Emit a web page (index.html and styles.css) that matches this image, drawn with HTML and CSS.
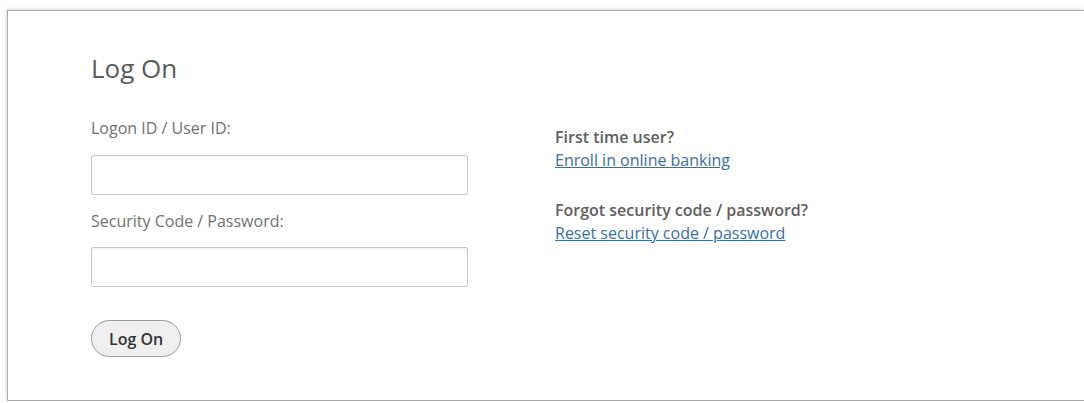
FILE: index.html
```html
<!DOCTYPE html>
<html lang="en">
<head>
<meta charset="utf-8">
<title>Log On</title>
<link rel="stylesheet" href="styles.css">
</head>
<body>
<main class="panel">
  <form class="logon-form" action="#" onsubmit="return false;">
    <h1 class="title">Log On</h1>
    <label class="field-label" for="userid">Logon ID / User ID:</label>
    <input class="text-input" id="userid" type="text">
    <label class="field-label" for="password">Security Code / Password:</label>
    <input class="text-input" id="password" type="password">
    <button class="btn" type="submit">Log On</button>
  </form>
  <aside class="help">
    <div class="help-item">
      <p class="help-title">First time user?</p>
      <a class="help-link" href="#">Enroll in online banking</a>
    </div>
    <div class="help-item">
      <p class="help-title">Forgot security code / password?</p>
      <a class="help-link" href="#">Reset security code / password</a>
    </div>
  </aside>
</main>
</body>
</html>
```

FILE: styles.css
```css
html, body {
  margin: 0;
  background: #fff;
}

body {
  font-family: "Open Sans", "Liberation Sans", sans-serif;
  color: #666;
}

.panel {
  box-sizing: border-box;
  height: 391px;
  margin: 10px 0 0 7px;
  border: 1px solid #ababab;
  border-right: 0;
  box-shadow: 0 0 4px rgba(0, 0, 0, 0.22);
  padding: 39px 0 0 83px;
  display: flex;
  gap: 87px;
}

.logon-form {
  display: flex;
  flex-direction: column;
  align-items: flex-start;
  width: 377px;
}

.title {
  margin: 0 0 31px;
  font-size: 26px;
  line-height: 36px;
  font-weight: 400;
  color: #5b5b5b;
}

.field-label {
  font-size: 16px;
  line-height: 22px;
  color: #717171;
  margin-bottom: 16px;
}

.text-input {
  box-sizing: border-box;
  width: 377px;
  height: 40px;
  margin: 0 0 15px;
  border: 1px solid #c8c8c8;
  border-radius: 2px;
  box-shadow: inset 0 1px 2px rgba(0, 0, 0, 0.06);
  background: #fff;
  font: inherit;
}

.text-input + .field-label {
  margin-bottom: 15px;
}

.btn {
  margin-top: 18px;
  height: 37px;
  padding: 0 17px;
  border: 1px solid #9a9a9a;
  border-radius: 19px;
  background: #efefef;
  font-family: inherit;
  font-size: 16px;
  font-weight: 600;
  color: #333;
}

.help {
  padding-top: 76px;
  display: flex;
  flex-direction: column;
  gap: 27px;
}

.help-item {
  display: flex;
  flex-direction: column;
  align-items: flex-start;
}

.help-title {
  margin: 0;
  font-size: 16px;
  line-height: 23px;
  font-weight: 600;
  color: #606060;
}

.help-link {
  font-size: 16px;
  line-height: 23px;
  color: #3670a8;
  text-decoration: underline;
}
```
